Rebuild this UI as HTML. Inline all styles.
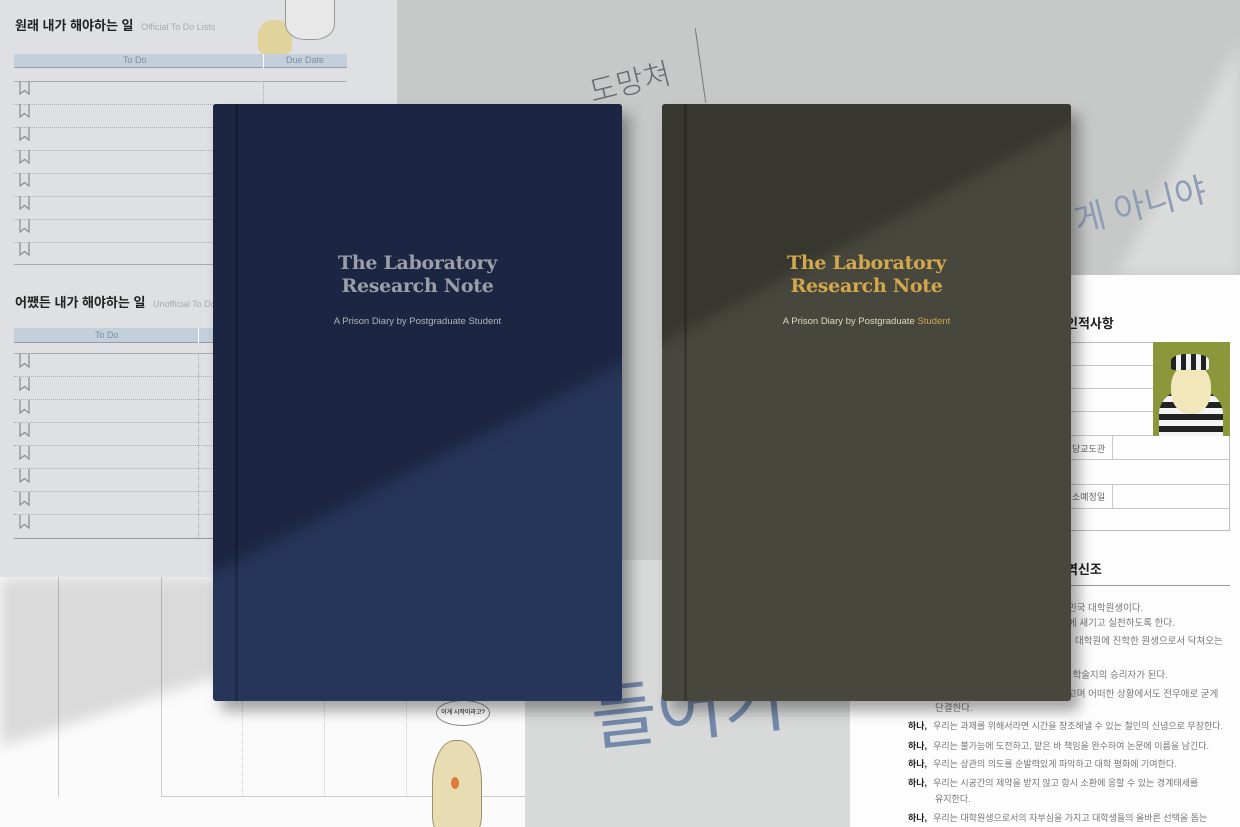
<!DOCTYPE html>
<html><head><meta charset="utf-8">
<style>
*{margin:0;padding:0;box-sizing:border-box}
html,body{width:1240px;height:827px;overflow:hidden}
body{position:relative;background:#c7c8c8;font-family:"Liberation Sans","Noto Sans CJK KR",sans-serif}
.abs{position:absolute}
.ko{font-family:"Liberation Sans","Noto Sans CJK KR",sans-serif}
.row{position:absolute;left:14px;height:0;border-top:1px dotted #a9adb3}
.bm{position:absolute;left:19px;width:11px;height:15px}
.hl{position:absolute;height:0;border-top:1px solid #c8c8c8}
.book{position:absolute;top:104px;width:409px;height:597px;border-radius:3px;box-shadow:8px 10px 14px rgba(0,0,0,.35);overflow:hidden}
.title{position:absolute;left:0;right:0;text-align:center;font-family:"DejaVu Serif","Liberation Serif",serif;font-weight:bold;font-size:19px;line-height:23px;letter-spacing:-0.3px}
.sub{position:absolute;left:0;right:0;text-align:center;font-size:9.5px}
.rt{position:absolute;font-size:9.5px;color:#777;white-space:nowrap}
.hn{font-weight:bold;color:#222;margin-right:6px}
.blur{position:absolute;left:0;top:0;width:100%;height:100%;filter:blur(7px)}
</style></head><body>
<svg width="0" height="0" style="position:absolute"><defs><symbol id="bk" viewBox="0 0 11 15"><path d="M1 1V14L5.5 10.5L10 14V1" fill="none" stroke="#8d9197" stroke-width="1.3"/></symbol></defs></svg>
<!-- lit wall top right -->
<div class="abs" style="left:397px;top:0;width:843px;height:275px;overflow:hidden"><div class="blur"><div class="abs" style="left:0;top:0;width:843px;height:275px;background:#dadbdb;clip-path:polygon(720px 275px,843px 40px,843px 275px)"></div></div></div>
<div class="abs" style="left:525px;top:560px;width:325px;height:267px;background:#d8d9d9"></div>
<!-- handwriting -->
<div class="abs ko" style="left:588px;top:58px;font-size:30px;color:#66696e;transform:rotate(-14deg);font-weight:300">도망쳐</div>
<div class="abs" style="left:700px;top:28px;width:1px;height:75px;background:#777;transform:rotate(-8deg)"></div>
<div class="abs ko" style="left:1072px;top:178px;font-size:34px;color:#8e9db3;transform:rotate(-14deg)">게 아니야</div>
<div class="abs ko" style="left:590px;top:650px;font-size:72px;color:#7389aa;transform:rotate(-6deg)">들어가</div>

<!-- bottom-left paper -->
<div class="abs" style="left:0;top:577px;width:525px;height:250px;background:#fbfbfb"></div>
<div class="abs" style="left:58px;top:577px;width:1px;height:220px;background:#ccc"></div>
<div class="abs" style="left:161px;top:577px;width:1px;height:220px;background:#ccc"></div>
<div class="abs" style="left:161px;top:796px;width:364px;height:1px;background:#ccc"></div>
<div class="abs" style="left:242px;top:680px;width:1px;height:116px;border-left:1px dotted #ccc"></div>
<div class="abs" style="left:324px;top:680px;width:1px;height:116px;border-left:1px dotted #ccc"></div>
<div class="abs" style="left:406px;top:680px;width:1px;height:116px;border-left:1px dotted #ccc"></div>
<div class="abs ko" style="left:436px;top:700px;width:54px;height:26px;border:1px solid #888;border-radius:50%;font-size:6px;text-align:center;line-height:24px;background:#fff">이게 시작이라고?</div>
<div class="abs" style="left:432px;top:740px;width:50px;height:95px;background:#e7dcb2;border-radius:45% 45% 20% 20%;border:1px solid #9a8f6a"></div>
<div class="abs" style="left:451px;top:777px;width:8px;height:12px;background:#e07a3a;border-radius:50%"></div>
<!-- shadow on lower left -->
<div class="abs" style="left:0;top:577px;width:525px;height:250px;overflow:hidden"><div class="blur"><div class="abs" style="left:0;top:0;width:525px;height:250px;background:rgba(0,0,0,.13);clip-path:polygon(0 0,525px 0,525px 0,0 170px)"></div></div></div>

<!-- top-left paper -->
<div class="abs" style="left:0;top:0;width:397px;height:577px;background:#dfe0e3"></div>
<div class="abs ko" style="left:15px;top:15px;font-size:13px;font-weight:bold;color:#222">원래 내가 해야하는 일 <span style="font-weight:normal;font-size:9px;color:#aaa;margin-left:4px">Official To Do Lists</span></div>
<div class="abs" style="left:258px;top:20px;width:34px;height:34px;background:#e0d49c;border-radius:45% 45% 20% 20%"></div>
<div class="abs" style="left:285px;top:0;width:50px;height:40px;background:#e8e8e8;border:1px solid #999;border-top:none;border-radius:0 0 40% 40%"></div>
<div class="abs" style="left:14px;top:54px;width:333px;height:14px;background:#c3cfdb;border-bottom:1px solid #99a"></div>
<div class="abs" style="left:263px;top:54px;width:1px;height:14px;background:#fff"></div>
<div class="abs" style="left:123px;top:55px;font-size:9px;color:#7c8ea6">To Do</div>
<div class="abs" style="left:286px;top:55px;font-size:9px;color:#7c8ea6">Due Date</div>
<div class="abs" style="left:14px;top:81px;width:333px;height:1px;background:#aaa"></div>
<div class="abs" style="left:263px;top:81px;height:183px;border-left:1px dotted #aaa"></div>
<div class="abs" style="left:14px;top:264px;width:333px;height:1px;background:#aaa"></div>
<svg class="bm" style="top:80px"><use href="#bk"/></svg><div class="row" style="top:104px;width:333px"></div>
<svg class="bm" style="top:103px"><use href="#bk"/></svg><div class="row" style="top:127px;width:333px"></div>
<svg class="bm" style="top:126px"><use href="#bk"/></svg><div class="row" style="top:150px;width:333px"></div>
<svg class="bm" style="top:149px"><use href="#bk"/></svg><div class="row" style="top:173px;width:333px"></div>
<svg class="bm" style="top:172px"><use href="#bk"/></svg><div class="row" style="top:196px;width:333px"></div>
<svg class="bm" style="top:195px"><use href="#bk"/></svg><div class="row" style="top:219px;width:333px"></div>
<svg class="bm" style="top:218px"><use href="#bk"/></svg><div class="row" style="top:242px;width:333px"></div>
<svg class="bm" style="top:241px"><use href="#bk"/></svg>

<div class="abs ko" style="left:15px;top:292px;font-size:13px;font-weight:bold;color:#222">어쨌든 내가 해야하는 일 <span style="font-weight:normal;font-size:9px;color:#aaa;margin-left:4px">Unofficial To Do</span></div>
<div class="abs" style="left:14px;top:328px;width:200px;height:15px;background:#c3cfdb;border-bottom:1px solid #99a"></div>
<div class="abs" style="left:198px;top:328px;width:1px;height:15px;background:#fff"></div>
<div class="abs" style="left:95px;top:330px;font-size:9px;color:#7c8ea6">To Do</div>
<div class="abs" style="left:14px;top:353px;width:200px;height:1px;background:#aaa"></div>
<div class="abs" style="left:198px;top:353px;height:185px;border-left:1px dotted #aaa"></div>
<div class="abs" style="left:14px;top:538px;width:200px;height:1px;background:#999"></div>
<svg class="bm" style="top:353px"><use href="#bk"/></svg><div class="row" style="top:376px;width:200px"></div>
<svg class="bm" style="top:376px"><use href="#bk"/></svg><div class="row" style="top:399px;width:200px"></div>
<svg class="bm" style="top:399px"><use href="#bk"/></svg><div class="row" style="top:422px;width:200px"></div>
<svg class="bm" style="top:422px"><use href="#bk"/></svg><div class="row" style="top:445px;width:200px"></div>
<svg class="bm" style="top:445px"><use href="#bk"/></svg><div class="row" style="top:468px;width:200px"></div>
<svg class="bm" style="top:468px"><use href="#bk"/></svg><div class="row" style="top:491px;width:200px"></div>
<svg class="bm" style="top:491px"><use href="#bk"/></svg><div class="row" style="top:514px;width:200px"></div>
<svg class="bm" style="top:514px"><use href="#bk"/></svg>

<!-- right paper -->
<div class="abs" style="left:850px;top:275px;width:390px;height:552px;background:#fdfdfd"></div>
<div class="abs ko" style="left:1066px;top:313px;font-size:13px;font-weight:bold;color:#222">인적사항</div>
<div class="abs" style="left:1060px;top:342px;width:170px;height:189px;border:1px solid #bbb"></div>
<div class="hl" style="left:1060px;top:365px;width:93px"></div>
<div class="hl" style="left:1060px;top:388px;width:93px"></div>
<div class="hl" style="left:1060px;top:411px;width:93px"></div>
<div class="hl" style="left:1060px;top:435px;width:170px"></div>
<div class="hl" style="left:1060px;top:459px;width:170px"></div>
<div class="hl" style="left:1060px;top:484px;width:170px"></div>
<div class="hl" style="left:1060px;top:508px;width:170px"></div>
<div class="abs" style="left:1112px;top:435px;width:1px;height:24px;background:#c8c8c8"></div>
<div class="abs" style="left:1112px;top:484px;width:1px;height:24px;background:#c8c8c8"></div>
<div class="abs ko" style="left:1072px;top:442px;font-size:9px;color:#666">당교도관</div>
<div class="abs ko" style="left:1072px;top:490px;font-size:9px;color:#666">소예정일</div>
<div class="abs" style="left:1153px;top:342px;width:77px;height:94px;background:#8b973a;overflow:hidden">
 <div class="abs" style="left:6px;top:48px;width:64px;height:60px;background:repeating-linear-gradient(180deg,#222 0 6px,#f4f4f4 6px 12px);border-radius:40% 40% 0 0"></div>
 <div class="abs" style="left:18px;top:22px;width:40px;height:50px;background:#f2e7bb;border-radius:45%"></div>
 <div class="abs" style="left:18px;top:12px;width:38px;height:16px;background:repeating-linear-gradient(90deg,#222 0 5px,#f4f4f4 5px 10px);border-radius:40% 40% 10% 10%"></div>
</div>
<div class="abs ko" style="left:1066px;top:559px;font-size:13px;font-weight:bold;color:#222">역신조</div>
<div class="hl" style="left:1060px;top:585px;width:170px;border-color:#999"></div>
<div class="rt ko" style="left:1068px;top:600px">민국 대학원생이다.</div>
<div class="rt ko" style="left:1068px;top:615px">에 새기고 실천하도록 한다.</div>
<div class="rt ko" style="left:1075px;top:633px">대학원에 진학한 원생으로서 닥쳐오는</div>
<div class="rt ko" style="left:1068px;top:667px">' 학술지의 승리자가 된다.</div>
<div class="rt ko" style="left:1068px;top:686px">고며 어떠한 상황에서도 전우애로 굳게</div>
<div class="rt ko" style="left:935px;top:700px">단결한다.</div>
<div class="rt ko" style="left:908px;top:719px;font-size:9px"><span class="hn">하나,</span>우리는 과제를 위해서라면 시간을 창조해낼 수 있는 철인의 신념으로 무장한다.</div>
<div class="rt ko" style="left:908px;top:739px;font-size:9px"><span class="hn">하나,</span>우리는 불가능에 도전하고, 맡은 바 책임을 완수하여 논문에 이름을 남긴다.</div>
<div class="rt ko" style="left:908px;top:757px;font-size:9px"><span class="hn">하나,</span>우리는 상관의 의도를 순발력있게 파악하고 대학 평화에 기여한다.</div>
<div class="rt ko" style="left:908px;top:776px;font-size:9px"><span class="hn">하나,</span>우리는 시공간의 제약을 받지 않고 항시 소환에 응할 수 있는 경계태세를</div>
<div class="rt ko" style="left:935px;top:792px;font-size:9px">유지한다.</div>
<div class="rt ko" style="left:908px;top:811px;font-size:9px"><span class="hn">하나,</span>우리는 대학원생으로서의 자부심을 가지고 대학생들의 올바른 선택을 돕는</div>

<!-- books -->
<div class="book" style="left:213px;background:#26365a">
 <div class="blur"><div class="abs" style="left:-20px;top:-20px;width:449px;height:637px;background:#1c2642;clip-path:polygon(0 0,449px 0,449px 270px,0 500px)"></div></div>
 <div class="abs" style="left:22px;top:0;width:3px;height:597px;background:rgba(0,0,0,.2)"></div>
 <div class="title" style="top:148px;color:#9a9ea6">The Laboratory<br>Research Note</div>
 <div class="sub" style="top:212px;color:#b0b4bc">A Prison Diary by Postgraduate Student</div>
</div>
<div class="book" style="left:662px;background:#47473d">
 <div class="blur"><div class="abs" style="left:-20px;top:-20px;width:449px;height:637px;background:#37372f;clip-path:polygon(0 0,449px 0,449px 30px,0 270px)"></div></div>
 <div class="abs" style="left:22px;top:0;width:3px;height:597px;background:rgba(0,0,0,.2)"></div>
 <div class="title" style="top:148px;color:#d3a84c">The Laboratory<br>Research Note</div>
 <div class="sub" style="top:212px;color:#e0d8c0">A Prison Diary by Postgraduate <span style="color:#d3a84c">Student</span></div>
</div>
</body></html>
